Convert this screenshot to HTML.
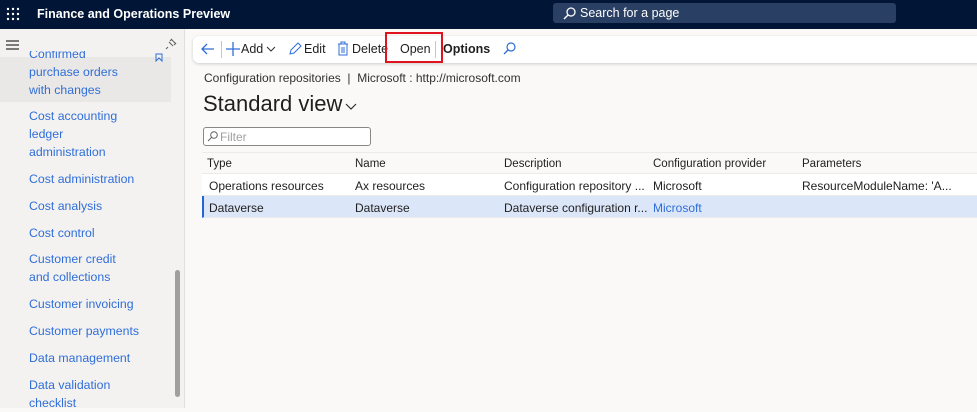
<!DOCTYPE html>
<html><head><meta charset="utf-8"><style>
*{box-sizing:border-box;margin:0;padding:0}
body{width:977px;height:408px;overflow:hidden;font-family:"Liberation Sans",sans-serif;background:#faf9f8;position:relative;font-size:12px;color:#201f1e}
.hdr{position:absolute;left:0;top:0;width:977px;height:29px;background:#011537}
.hdr .t{position:absolute;left:37px;top:7px;color:#fff;font-size:12.5px;font-weight:bold}
.srch{position:absolute;left:553px;top:3px;width:343px;height:20px;background:#293f63;border-radius:3px;color:#fff;font-size:12.5px;padding:3px 0 0 27px}
.side{position:absolute;left:0;top:29px;width:185px;height:379px;background:#f3f2f1;border-right:1px solid #e1dfdd}
.side a{position:absolute;left:29px;color:#2f6ed8;font-size:12.3px;line-height:18px;text-decoration:none}
.sel{position:absolute;left:0;top:28px;width:171px;height:45px;background:#eae8e6}
.scroll{position:absolute;left:175px;top:241px;width:5px;height:127px;background:#a19f9d;border-radius:3px}
.tb{position:absolute;left:193px;top:36px;width:790px;height:27px;background:#fff;border-radius:6px;box-shadow:0 1px 3px rgba(0,0,0,.18);font-size:12.5px}
.tb span{position:absolute;top:6px}
.open{position:absolute;left:385px;top:32px;width:58px;height:31px;border:2px solid #e0141e}
.bc{position:absolute;left:204px;top:71px;font-size:12px;color:#323130}
h1{position:absolute;left:203px;top:91px;font-size:22px;font-weight:normal;color:#201f1e}
.flt{position:absolute;left:203px;top:127px;width:168px;height:19px;border:1px solid #8a8886;border-radius:3px;background:#fff;font-size:12px;color:#a19f9d;padding:2px 0 0 16px}
.tbl{position:absolute;left:202px;top:152px;width:775px}
.row{position:relative;height:22px;border-bottom:1px solid #edebe9;background:#fff}
.row span{position:absolute;top:5px;font-size:12px}
.row.h{background:#faf9f8;border-top:1px solid #edebe9;font-weight:bold}
.row.h span{font-weight:normal;color:#201f1e;font-size:11.5px}
.row.s{background:#dbe6f8;border-left:2px solid #2266d3}
</style></head><body>
<div class="hdr">
<svg style="position:absolute;left:6px;top:7px" width="14" height="14"><g fill="#fff"><circle cx="2" cy="2" r="1.2"/><circle cx="7" cy="2" r="1.2"/><circle cx="12" cy="2" r="1.2"/><circle cx="2" cy="7" r="1.2"/><circle cx="7" cy="7" r="1.2"/><circle cx="12" cy="7" r="1.2"/><circle cx="2" cy="12" r="1.2"/><circle cx="7" cy="12" r="1.2"/><circle cx="12" cy="12" r="1.2"/></g></svg>
<div class="t">Finance and Operations Preview</div>
<div class="srch"><svg style="position:absolute;left:10px;top:4px" width="13" height="13"><circle cx="8" cy="5" r="4" fill="none" stroke="#fff" stroke-width="1.3"/><path d="M5 8L1 12" stroke="#fff" stroke-width="1.4"/></svg>Search for a page</div>
</div>
<div class="side">
<svg style="position:absolute;left:6px;top:11px" width="14" height="10"><path d="M0 1h13M0 5h13M0 9h13" stroke="#323130" stroke-width="1.2"/></svg>
<svg style="position:absolute;left:165px;top:8px" width="13" height="13"><path d="M3 10L1 12M4 5l4 4M6 2l5 5M5 4l2-2M9 8l2-2" stroke="#605e5c" fill="none" stroke-width="1"/></svg>
<div class="sel"></div>
<svg style="position:absolute;left:155px;top:24px" width="9" height="9"><path d="M1 8V1h6v7L4 5z" fill="none" stroke="#2f6ed8"/></svg>
<a style="top:16px;clip-path:inset(6px 0 0 0)">Confirmed</a>
<a style="top:34px">purchase orders<br>with changes</a>
<a style="top:78px">Cost accounting<br>ledger<br>administration</a>
<a style="top:141px">Cost administration</a>
<a style="top:168px">Cost analysis</a>
<a style="top:195px">Cost control</a>
<a style="top:221px">Customer credit<br>and collections</a>
<a style="top:266px">Customer invoicing</a>
<a style="top:293px">Customer payments</a>
<a style="top:320px">Data management</a>
<a style="top:347px">Data validation<br>checklist</a>
<div class="scroll"></div>
</div>
<div class="tb">
<svg style="position:absolute;left:8px;top:7px" width="14" height="12"><path d="M13 6H1M6 1L1 6l5 5" fill="none" stroke="#2f6ed8" stroke-width="1.3"/></svg>
<div style="position:absolute;left:28px;top:5px;width:1px;height:17px;background:#c8c6c4"></div>
<svg style="position:absolute;left:33px;top:6px" width="14" height="14"><path d="M7 0v14M0 7h14" stroke="#2f6ed8" stroke-width="1.3"/></svg>
<span style="left:48px">Add</span>
<svg style="position:absolute;left:73px;top:10px" width="10" height="6"><path d="M1 1l4 4 4-4" fill="none" stroke="#323130"/></svg>
<svg style="position:absolute;left:96px;top:6px" width="13" height="13"><path d="M1 12l1-4 7-7 3 3-7 7z" fill="none" stroke="#2f6ed8"/></svg>
<span style="left:111px">Edit</span>
<svg style="position:absolute;left:144px;top:5px" width="12" height="15"><path d="M1 3h10M4 3V1h4v2M2 3v11h8V3M5 6v6M7 6v6" fill="none" stroke="#2f6ed8"/></svg>
<span style="left:159px">Delete</span>
<span style="left:207px">Open</span>
<div style="position:absolute;left:242px;top:5px;width:1px;height:17px;background:#c8c6c4"></div>
<span style="left:250px;font-weight:bold">Options</span>
<svg style="position:absolute;left:310px;top:6px" width="13" height="13"><circle cx="8" cy="5" r="4" fill="none" stroke="#2f6ed8" stroke-width="1.2"/><path d="M5 8L1 12" stroke="#2f6ed8" stroke-width="1.3"/></svg>
</div>
<div class="open"></div>
<div class="bc">Configuration repositories &nbsp;| &nbsp;Microsoft : http://microsoft.com</div>
<h1>Standard view<svg width="12" height="8" style="margin-left:3px"><path d="M1 1l5 5 5-5" fill="none" stroke="#323130" stroke-width="1.2"/></svg></h1>
<div class="flt"><svg style="position:absolute;left:3px;top:3px" width="11" height="11"><circle cx="7" cy="4" r="3.3" fill="none" stroke="#605e5c"/><path d="M4.5 6.5L1 10" stroke="#605e5c"/></svg>Filter</div>
<div class="tbl">
<div class="row h"><span style="left:5px">Type</span><span style="left:153px">Name</span><span style="left:302px">Description</span><span style="left:451px">Configuration provider</span><span style="left:600px">Parameters</span></div>
<div class="row"><span style="left:7px">Operations resources</span><span style="left:153px">Ax resources</span><span style="left:302px">Configuration repository ...</span><span style="left:451px">Microsoft</span><span style="left:600px">ResourceModuleName: 'A...</span></div>
<div class="row s"><span style="left:5px">Dataverse</span><span style="left:151px">Dataverse</span><span style="left:300px">Dataverse configuration r...</span><span style="left:449px;color:#2f6ed8">Microsoft</span></div>
</div>
</body></html>
